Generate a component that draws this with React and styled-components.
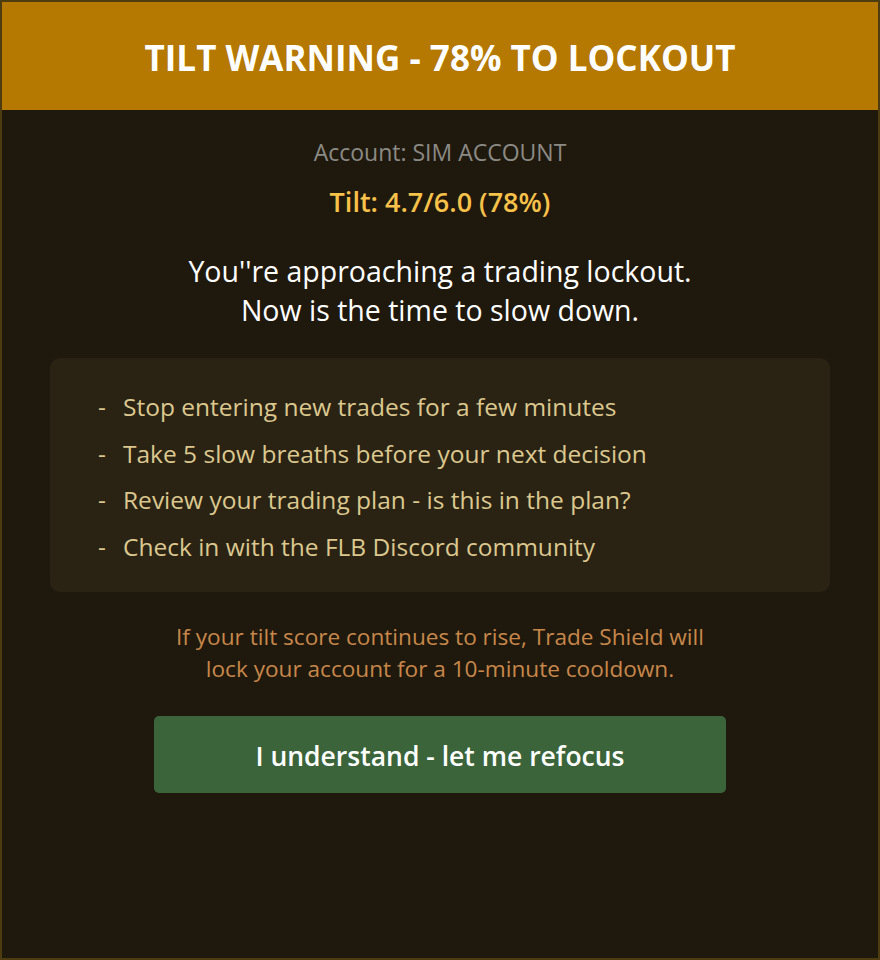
import React from 'react'
import styled, { createGlobalStyle } from 'styled-components'

const GlobalStyle = createGlobalStyle`
  html, body {
    margin: 0;
    padding: 0;
    background: #1f190d;
  }
  * {
    box-sizing: border-box;
  }
`

const tips = [
  'Stop entering new trades for a few minutes',
  'Take 5 slow breaths before your next decision',
  'Review your trading plan - is this in the plan?',
  'Check in with the FLB Discord community',
]

function App() {
  return (
    <>
      <GlobalStyle />
      <Frame>
        <Header>
          <Title>TILT WARNING - 78% TO LOCKOUT</Title>
        </Header>
        <Body>
          <AccountLine>Account: SIM ACCOUNT</AccountLine>
          <TiltLine>Tilt: 4.7/6.0 (78%)</TiltLine>
          <Message>
            You''re approaching a trading lockout.
            <br />
            Now is the time to slow down.
          </Message>
          <TipBox>
            {tips.map(tip => (
              <Tip key={tip}>
                <Dash>-</Dash>
                {tip}
              </Tip>
            ))}
          </TipBox>
          <Notice>
            If your tilt score continues to rise, Trade Shield will
            <br />
            lock your account for a 10-minute cooldown.
          </Notice>
          <AckButton>I understand - let me refocus</AckButton>
        </Body>
      </Frame>
    </>
  )
}

const Frame = styled.div`
  width: 880px;
  height: 960px;
  border: 2px solid #4d3c0f;
  background: #1f190d;
  font-family: "Open Sans", "Noto Sans", sans-serif;
  display: flex;
  flex-direction: column;
`

const Header = styled.div`
  height: 108px;
  padding-top: 2px;
  background: #b57800;
  display: flex;
  align-items: center;
  justify-content: center;
`

const Title = styled.h1`
  margin: 0;
  color: #ffffff;
  font-size: 35px;
  font-weight: 700;
  letter-spacing: 0;
`

const Body = styled.div`
  display: flex;
  flex-direction: column;
  align-items: center;
  padding: 28px 48px 0;
`

const AccountLine = styled.div`
  color: #8c8a85;
  font-size: 23px;
  line-height: 28px;
`

const TiltLine = styled.div`
  margin-top: 21px;
  color: #f7c14a;
  font-size: 27px;
  font-weight: 600;
  line-height: 30px;
`

const Message = styled.p`
  margin: 35px 0 0;
  color: #ffffff;
  font-size: 28.5px;
  line-height: 39px;
  text-align: center;
`

const TipBox = styled.div`
  margin-top: 28px;
  width: 780px;
  background: #2a2314;
  border-radius: 10px;
  padding: 26px 48px 22px;
`

const Tip = styled.div`
  color: #dcc88e;
  font-size: 24.5px;
  line-height: 46.5px;
  display: flex;
`

const Dash = styled.span`
  width: 25px;
  flex: none;
`

const Notice = styled.p`
  margin: 29px 0 0;
  color: #c8874a;
  font-size: 22.6px;
  line-height: 32px;
  text-align: center;
`

const AckButton = styled.button`
  margin-top: 31px;
  width: 572px;
  height: 77px;
  padding: 3px 0 0;
  border: none;
  border-radius: 5px;
  background: #3b643b;
  color: #ffffff;
  font-family: inherit;
  font-size: 26.5px;
  font-weight: 600;
  cursor: pointer;
`

export default App
